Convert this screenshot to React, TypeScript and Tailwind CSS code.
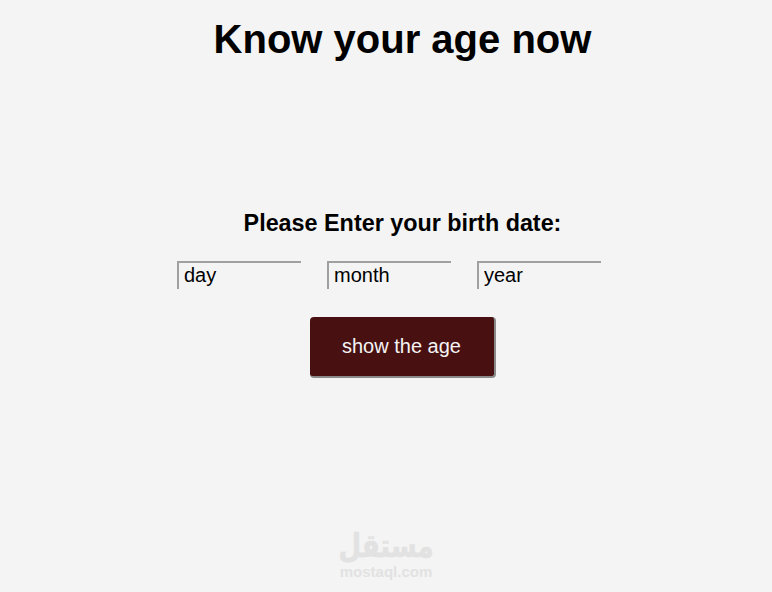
export default function App() {
  return (
    <div className="relative h-[592px] w-full overflow-hidden bg-[#f4f4f4] pl-[33px] font-['Liberation_Sans',Arial,sans-serif] text-black">
      <h1 className="pt-[16px] text-center text-[40px] font-bold leading-[46px]">Know your age now</h1>

      <h2 className="mt-[148px] text-center text-[23.35px] font-bold leading-[27px]">Please Enter your birth date:</h2>

      <div className="mt-[24px] ml-[144px] flex gap-[26px]">
        {["day", "month", "year"].map(p => (
          <input
            key={p}
            placeholder={p}
            aria-label={p}
            className="h-[28px] w-[124px] border-t-2 border-l-2 border-[#a0a0a0] bg-transparent px-[5px] pb-[3px] text-[20px] text-black outline-none placeholder:text-black"
          />
        ))}
      </div>

      <div className="mt-[28px] flex justify-center">
        <button className="h-[61px] w-[186px] rounded-[4px] border-r-2 border-b-2 border-[#8a8a8a] bg-[#481010] pb-[2px] text-[20px] text-[#f4f4f4]">
          show the age
        </button>
      </div>

      <div className="absolute bottom-[13px] left-[339px] flex w-[94px] flex-col items-center text-[#e2e2e2]">
        <span dir="rtl" lang="ar" className="origin-bottom scale-y-[1.25] font-['DejaVu_Sans',sans-serif] text-[26px] font-bold leading-[28px] [-webkit-text-stroke:0.5px_#e2e2e2]">مستقل</span>
        <span className="mt-[2px] text-[15px] font-bold leading-[14px]">mostaql.com</span>
      </div>
    </div>
  );
}
